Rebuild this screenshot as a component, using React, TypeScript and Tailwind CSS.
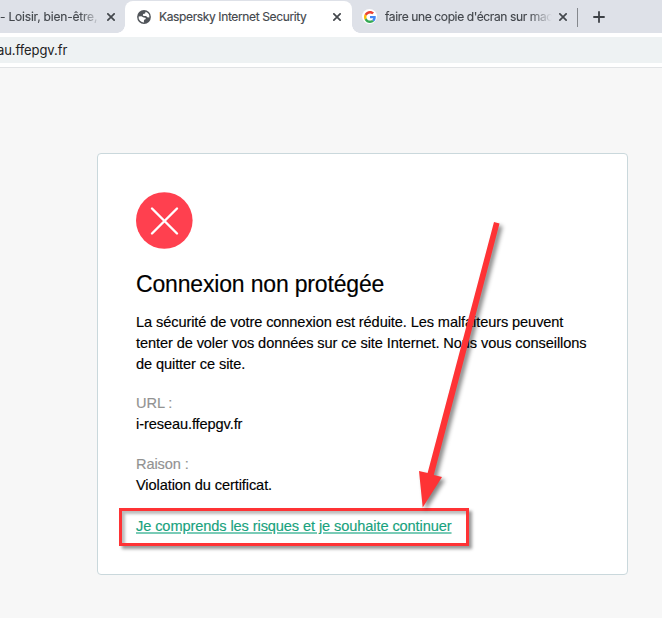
import type { ReactNode } from "react";

function CloseIcon() {
  return (
    <svg className="h-2 w-2 shrink-0" viewBox="0 0 8 8" fill="none" stroke="#43474c" strokeWidth={1.7}>
      <path d="M.3.3l7.4 7.4M7.7.3L.3 7.7" />
    </svg>
  );
}

function GlobeIcon() {
  return (
    <svg className="h-3.5 w-3.5 shrink-0" viewBox="0 0 14 14">
      <circle cx="7" cy="7" r="6.9" fill="#505459" />
      <path
        d="M8.6 1.7l-.5 1.7-2 .5-.3 1.5 1.1.7 2.2-.2 1.1 1.4 2.1.3A5.4 5.4 0 0 0 8.6 1.7zM1.6 6.4l2.8-.1 2.3 1.1 1.7.3.5 1.2-1.7.9-.4 1.4.4 1.2A5.4 5.4 0 0 1 1.6 6.4z"
        fill="#fff"
      />
    </svg>
  );
}

function GoogleIcon() {
  return (
    <span className="flex h-[15px] w-[15px] shrink-0 items-center justify-center rounded-full bg-white">
      <svg className="h-3 w-3" viewBox="0 0 48 48">
        <path fill="#EA4335" d="M24 9.5c3.54 0 6.71 1.22 9.21 3.6l6.85-6.85C35.9 2.38 30.47 0 24 0 14.62 0 6.51 5.38 2.56 13.22l7.98 6.19C12.43 13.72 17.74 9.5 24 9.5z" />
        <path fill="#4285F4" d="M46.98 24.55c0-1.57-.15-3.09-.38-4.55H24v9.02h12.94c-.58 2.96-2.26 5.48-4.78 7.18l7.73 6c4.51-4.18 7.09-10.36 7.09-17.65z" />
        <path fill="#FBBC05" d="M10.53 28.59A14.5 14.5 0 0 1 9.77 24c0-1.6.27-3.14.76-4.59l-7.98-6.19A23.99 23.99 0 0 0 0 24c0 3.88.92 7.54 2.56 10.78l7.97-6.19z" />
        <path fill="#34A853" d="M24 48c6.48 0 11.93-2.13 15.89-5.81l-7.73-6c-2.15 1.45-4.92 2.3-8.16 2.3-6.26 0-11.57-4.22-13.47-9.91l-7.98 6.19C6.51 42.62 14.62 48 24 48z" />
      </svg>
    </span>
  );
}

function TabStrip() {
  return (
    <div className="flex h-[33px] bg-[#dee1e8] font-['Inter',sans-serif] text-xs text-[#43474c] [-webkit-text-stroke:0.15px]">
      <div className="flex w-[125px] items-center pr-[10px]">
        <span className="w-[107px] whitespace-nowrap tracking-[-0.2px] [mask-image:linear-gradient(to_right,#000_74%,transparent_94%)]">
          - Loisir, bien-être,
        </span>
        <CloseIcon />
      </div>

      {/* Active tab, with the outward curves at its foot */}
      <div className="relative mt-px flex w-[227px] items-center rounded-t-lg bg-white pr-[11px] pb-px pl-3 before:absolute before:bottom-0 before:-left-2 before:h-2 before:w-2 before:bg-[radial-gradient(circle_at_0_0,transparent_7.5px,#fff_8px)] after:absolute after:-right-2 after:bottom-0 after:h-2 after:w-2 after:bg-[radial-gradient(circle_at_100%_0,transparent_7.5px,#fff_8px)]">
        <GlobeIcon />
        <span className="ml-2 flex-1 whitespace-nowrap tracking-[-0.37px]">Kaspersky Internet Security</span>
        <CloseIcon />
      </div>

      <div className="flex w-[225px] items-center pl-[10px]">
        <GoogleIcon />
        <span className="mr-[7px] ml-2 w-[167px] whitespace-nowrap tracking-[-0.38px] [mask-image:linear-gradient(to_right,#000_86%,transparent_100%)]">
          faire une copie d'écran sur mac
        </span>
        <CloseIcon />
      </div>
      <div className="mt-2 h-[19px] w-px bg-[#85888d]" />
      <svg className="mt-[11px] ml-[15px] h-3 w-3" viewBox="0 0 12 12" stroke="#3d4146" strokeWidth={1.8}>
        <path d="M6 .3v11.4M.3 6h11.4" />
      </svg>
    </div>
  );
}

function Detail({ label, children }: { label: string; children: ReactNode }) {
  return (
    <div>
      <dt className="text-[#929292]">{label}</dt>
      <dd>{children}</dd>
    </div>
  );
}

export default function App() {
  return (
    <div className="relative h-[618px] w-[662px] overflow-hidden bg-[#f7f7f7]">
      <TabStrip />

      <div className="h-[35px] border-b border-[#e1e3e5] bg-white pt-1">
        <div className="flex h-[26px] items-center bg-[#eef2f3] pt-px font-['Inter',sans-serif] text-[13px] text-[#222]">
          <span className="-ml-[3px] whitespace-nowrap tracking-[-0.08px]">au.ffepgv.fr</span>
        </div>
      </div>

      <main className="mt-[85px] ml-[97px] h-[422px] w-[531px] rounded border border-[#cad8dc] bg-white px-[38px] pt-[38px] font-['Liberation_Sans',Arial,sans-serif] text-[14.6px] leading-[21px] tracking-[-0.1px] text-black [-webkit-text-stroke:0.15px]">
        <svg className="h-[57px] w-[57px]" viewBox="0 0 57 57" fill="none">
          <circle cx="28.3" cy="28.5" r="28.3" fill="#ff404f" />
          <path d="M16 16.5l25 25M41 16.5l-25 25" stroke="#fff" strokeWidth={2.4} strokeLinecap="round" />
        </svg>
        <h1 className="mt-5 text-[23px] leading-[30px] tracking-[-0.17px] whitespace-nowrap">Connexion non protégée</h1>
        <p className="mt-[13px] whitespace-nowrap">
          La sécurité de votre connexion est réduite. Les malfaiteurs peuvent
          <br />
          tenter de voler vos données sur ce site Internet. Nous vous conseillons
          <br />
          de quitter ce site.
        </p>
        <dl className="mt-[18px] grid gap-[19px]">
          <Detail label="URL :">i-reseau.ffepgv.fr</Detail>
          <Detail label="Raison :">Violation du certificat.</Detail>
        </dl>
        <div className="mt-3 -ml-[17px] flex h-[38px] w-[350px] items-center border-[3px] border-[#fe3335] pb-[2px] pl-[14px] shadow-[3px_3px_3px_#0006,inset_3px_3px_3px_#0004]">
          <a href="#" className="whitespace-nowrap text-[#18a27d] underline decoration-[#79cbb6] decoration-2 underline-offset-1">
            Je comprends les risques et je souhaite continuer
          </a>
        </div>
      </main>

      {/* Arrow pointing at the continue link */}
      <svg
        className="pointer-events-none absolute top-[215px] left-[410px] h-[300px] w-[100px] overflow-visible drop-shadow-[3px_3px_2px_#0007]"
        viewBox="410 215 100 300"
      >
        <path d="M494 222l5.5 1.6-65.7 251.5 8.2 1.9-19.3 30.5-3.7-36.5 8.6 2z" fill="#fe3335" />
      </svg>
    </div>
  );
}
